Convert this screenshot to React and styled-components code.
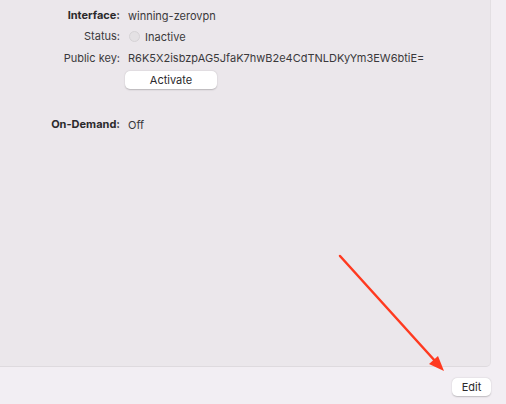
import React from "react";
import styled, { createGlobalStyle } from "styled-components";

const GlobalStyle = createGlobalStyle`
	html, body {
		margin: 0;
		padding: 0;
		background: #f2eef3;
		font-family: Inter, "Liberation Sans", sans-serif;
		font-size: 11px;
		color: #2b2a2c;
	}
`;

const Page = styled.div`
	position: relative;
	width: 506px;
	height: 404px;
	display: flex;
	flex-direction: column;
	overflow: hidden;
`;

const Panel = styled.section`
	width: 491px;
	height: 367px;
	background: #ebe7eb;
	border-bottom: 1px solid #dedade;
	border-right: 1px solid #e3dfe3;
	border-bottom-right-radius: 5px;
	box-sizing: border-box;
	padding-top: 5px;
`;

const Rows = styled.div`
	display: grid;
	grid-template-columns: 120px 1fr;
	column-gap: 8px;
	align-items: center;
`;

const Label = styled.div`
	text-align: right;
	font-weight: ${(p) => (p.bold ? 700 : 400)};
	color: ${(p) => (p.bold ? "#2b2a2c" : "#3a393b")};
	height: ${(p) => p.h || 21}px;
	line-height: ${(p) => p.h || 21}px;
	margin-top: ${(p) => p.mt || 0}px;
`;

const Value = styled.div`
	display: flex;
	align-items: center;
	gap: 5px;
	height: ${(p) => p.h || 21}px;
	margin-top: ${(p) => p.mt || 0}px;
	color: #3a393b;
`;

const Dot = styled.span`
	width: 9px;
	height: 9px;
	border-radius: 50%;
	background: #e4e1e4;
	border: 1px solid #d6d3d6;
	margin-left: 1px;
`;

const Button = styled.button`
	font-family: inherit;
	font-size: 11px;
	color: #2b2a2c;
	background: #ffffff;
	border: none;
	border-radius: 5px;
	box-shadow: 0 0.5px 1.5px rgba(0, 0, 0, 0.22);
	height: 18px;
	width: ${(p) => p.w}px;
	padding: 0;
	cursor: pointer;
`;

const ButtonCell = styled.div`
	grid-column: 2;
	margin-left: -3px;
	margin-top: 2px;
	height: 18px;
`;

const Footer = styled.footer`
	flex: 1;
	display: flex;
	justify-content: flex-end;
	padding: 11px 15px 0 0;
`;

const Arrow = styled.svg`
	position: absolute;
	left: 0;
	top: 0;
	pointer-events: none;
`;

const App = () => {
	return (
		<Page>
			<GlobalStyle />
			<Panel>
				<Rows>
					<Label bold>Interface:</Label>
					<Value>winning-zerovpn</Value>

					<Label>Status:</Label>
					<Value>
						<Dot />
						Inactive
					</Value>

					<Label h={22}>Public key:</Label>
					<Value h={22}>R6K5X2isbzpAG5JfaK7hwB2e4CdTNLDKyYm3EW6btiE=</Value>

					<ButtonCell>
						<Button w={92}>Activate</Button>
					</ButtonCell>

					<Label bold mt={25}>
						On-Demand:
					</Label>
					<Value mt={25}>Off</Value>
				</Rows>
			</Panel>
			<Footer>
				<Button w={39}>Edit</Button>
			</Footer>
			<Arrow width="506" height="404">
				<line
					x1="340"
					y1="256"
					x2="436"
					y2="362"
					stroke="#ff3a20"
					strokeWidth="2.5"
					strokeLinecap="round"
				/>
				<polygon points="444,371 429,364 438,356" fill="#ff3a20" />
			</Arrow>
		</Page>
	);
};

export default App;
